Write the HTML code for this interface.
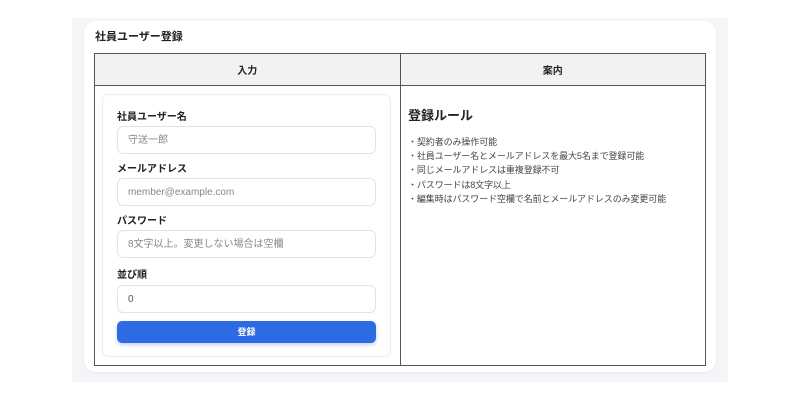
<!DOCTYPE html>
<html><head><meta charset="utf-8"><style>
*{box-sizing:border-box;margin:0;padding:0}
body{width:800px;height:400px;background:#fff;font-family:"Liberation Sans","Noto Sans CJK JP",sans-serif;position:relative;overflow:hidden;color:#222}
.bg{position:absolute;left:72px;top:18px;width:656px;height:364px;background:#f4f5f8}
.card{position:absolute;left:84px;top:21px;width:632px;height:351px;background:#fff;border-radius:12px;box-shadow:0 1px 3px rgba(0,0,0,.05)}
.title{position:absolute;left:95px;top:28px;font-size:11px;font-weight:bold}
table{position:absolute;left:94px;top:53px;width:612px;height:313px;border-collapse:collapse}
td,th{border:1px solid #555}
th{height:32px;background:#f2f2f2;font-size:10px;font-weight:bold}
td{vertical-align:top;position:relative}
.form{position:absolute;left:102px;top:94px;width:289px;height:263px;border:1px solid #eceef2;border-radius:6px;background:#fff}
.lbl{position:absolute;left:117px;font-size:10px;font-weight:bold}
.inp{position:absolute;left:117px;width:259px;height:28px;border:1px solid #dfe3ea;border-radius:6px;font-size:10px;color:#888;padding-left:10px;line-height:28px}
.btn{position:absolute;left:117px;top:321px;width:259px;height:22px;background:#2d6be4;border-radius:5px;color:#fff;font-size:9px;font-weight:bold;text-align:center;line-height:22px;box-shadow:0 2px 4px rgba(45,107,228,.3)}
.h{position:absolute;left:408px;top:105px;font-size:13px;font-weight:bold}
.list{position:absolute;left:408px;top:135px;font-size:9px;line-height:14.2px;color:#444;letter-spacing:-0.1px}
</style></head><body>
<div class="bg"></div><div class="card"></div>
<div class="title">社員ユーザー登録</div>
<table><tr><th>入力</th><th>案内</th></tr><tr><td></td><td></td></tr></table>
<div class="form"></div>
<div class="lbl" style="top:108px">社員ユーザー名</div>
<div class="inp" style="top:126px">守送一郎</div>
<div class="lbl" style="top:160px">メールアドレス</div>
<div class="inp" style="top:178px">member@example.com</div>
<div class="lbl" style="top:212px">パスワード</div>
<div class="inp" style="top:230px">8文字以上。変更しない場合は空欄</div>
<div class="lbl" style="top:266px">並び順</div>
<div class="inp" style="top:285px;color:#555">0</div>
<div class="btn">登録</div>
<div class="h">登録ルール</div>
<div class="list">・契約者のみ操作可能<br>・社員ユーザー名とメールアドレスを最大5名まで登録可能<br>・同じメールアドレスは重複登録不可<br>・パスワードは8文字以上<br>・編集時はパスワード空欄で名前とメールアドレスのみ変更可能</div>
</body></html>
